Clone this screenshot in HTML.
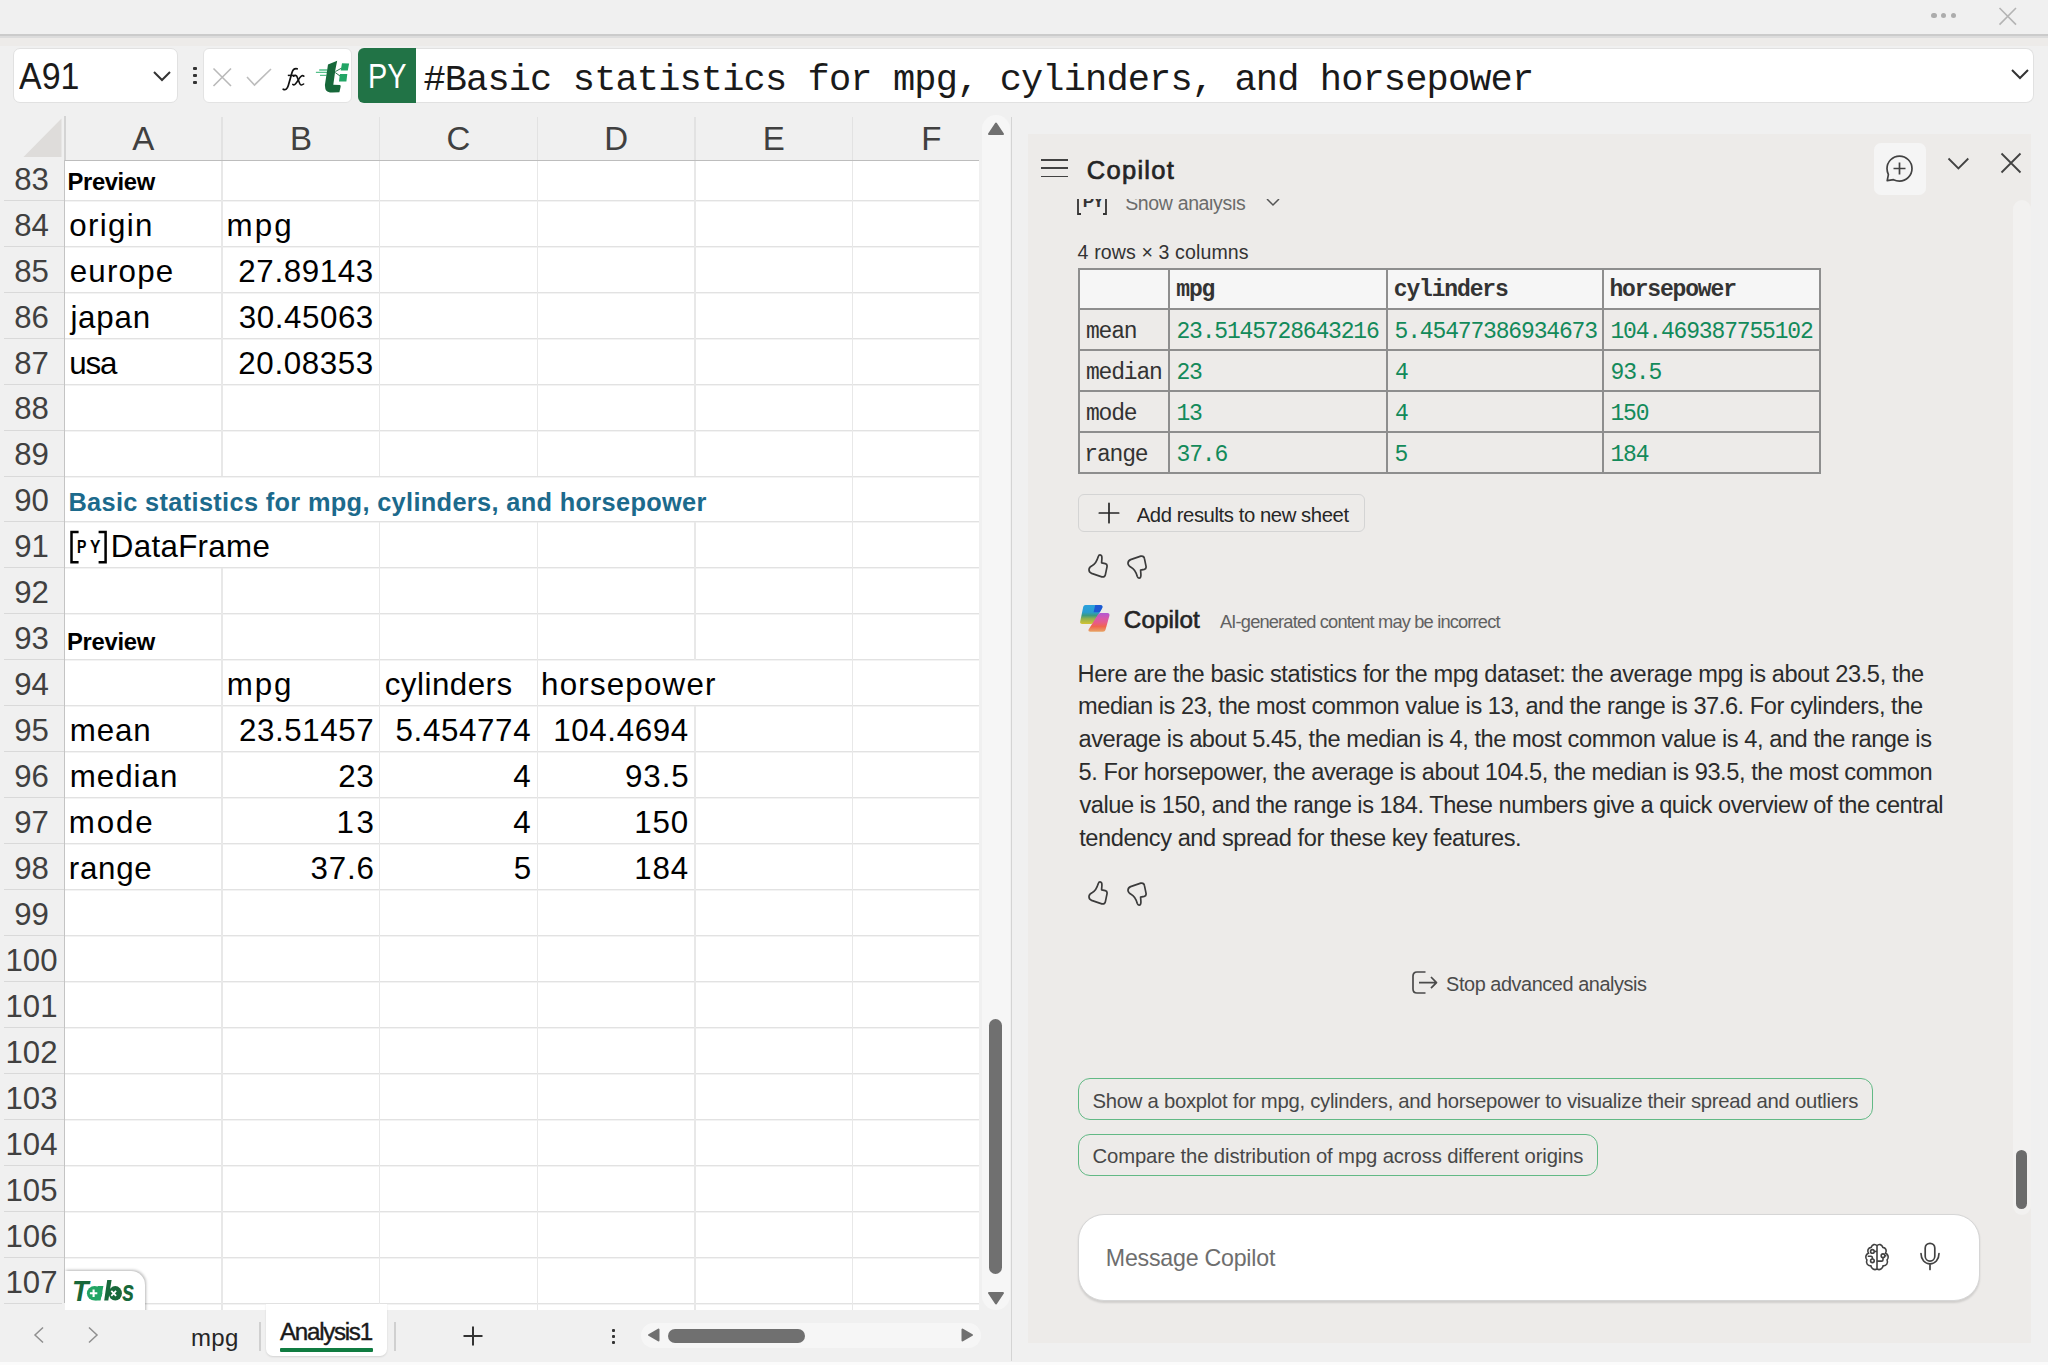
<!DOCTYPE html>
<html><head><meta charset="utf-8"><style>
html,body{margin:0;padding:0;}
body{width:2048px;height:1365px;position:relative;overflow:hidden;background:#f0f0f0;font-family:'Liberation Sans',sans-serif;}
</style></head><body>
<div style="position:absolute;left:0px;top:0px;width:2048px;height:34px;background:#f0f0f0"></div>
<div style="position:absolute;left:0px;top:33.5px;width:2048px;height:2px;background:#cbcbcb"></div>
<div style="position:absolute;left:0px;top:35.5px;width:2048px;height:2px;background:#dcdcdc"></div>
<div style="position:absolute;left:0px;top:37.5px;width:2048px;height:8px;background:#edebe9"></div>
<div style="position:absolute;left:1931.4px;top:12.700000000000001px;width:5.2px;height:5.2px;background:#acacac;border-radius:50%"></div>
<div style="position:absolute;left:1940.9px;top:12.700000000000001px;width:5.2px;height:5.2px;background:#acacac;border-radius:50%"></div>
<div style="position:absolute;left:1950.9px;top:12.700000000000001px;width:5.2px;height:5.2px;background:#acacac;border-radius:50%"></div>
<svg style="position:absolute;left:1997px;top:6px" width="22" height="21"><path d="M2.5 2 L19 18.6 M19 2 L2.5 18.6" stroke="#b4b4b4" stroke-width="1.6"/></svg>
<div style="position:absolute;left:13px;top:47.5px;width:165px;height:55.5px;background:#fff;border:1px solid #e1e1e1;border-radius:7px;box-sizing:border-box"></div>
<div style="position:absolute;top:58.20px;font-family:'Liberation Sans',sans-serif;font-size:37.68px;line-height:37.68px;color:#1a1a1a;font-weight:normal;white-space:nowrap;left:19.00px;transform:scaleX(0.9005);transform-origin:0 0;">A91</div>
<svg style="position:absolute;left:152px;top:70px" width="20" height="13"><path d="M2 2 L10 10 L18 2" fill="none" stroke="#333" stroke-width="2"/></svg>
<div style="position:absolute;left:192.5px;top:66.7px;width:4px;height:3.8px;background:#333;border-radius:1px"></div>
<div style="position:absolute;left:192.5px;top:73.7px;width:4px;height:3.8px;background:#333;border-radius:1px"></div>
<div style="position:absolute;left:192.5px;top:80.7px;width:4px;height:3.8px;background:#333;border-radius:1px"></div>
<div style="position:absolute;left:203px;top:48px;width:149px;height:55px;background:#fff;border:1px solid #e3e3e3;border-radius:6px;box-sizing:border-box"></div>
<svg style="position:absolute;left:211px;top:66px" width="24" height="22"><path d="M2.5 2.5 L20 20 M20 2.5 L2.5 20" stroke="#b9b9b9" stroke-width="1.6"/></svg>
<svg style="position:absolute;left:245px;top:67px" width="28" height="20"><path d="M2 10 L9.5 18 L26 2" fill="none" stroke="#bdbdbd" stroke-width="1.6"/></svg>
<svg style="position:absolute;left:275px;top:60px" width="36" height="36" viewBox="275 60 36 36"><path d="M283.2 89.2 C285.5 90.6 287.3 88.8 288.3 85.5 L292 72.5 C293 69.3 294.6 68.2 297.2 68.8" fill="none" stroke="#111" stroke-width="1.7" stroke-linecap="round"/><path d="M287.8 75.4 H295.8" stroke="#111" stroke-width="1.5"/><path d="M293.5 76.2 C295.5 74.8 296.6 75.5 297.4 77.6 L299.6 83.2 C300.4 85.2 301.6 85.6 303.6 84" fill="none" stroke="#111" stroke-width="1.6" stroke-linecap="round"/><path d="M303.8 76.2 C302.5 75 301.4 75.6 300 77.4 L296.8 82.2 C295.3 84.6 294 85.4 292.8 84.4" fill="none" stroke="#111" stroke-width="1.6" stroke-linecap="round"/></svg>
<svg style="position:absolute;left:310px;top:55px" width="45" height="42" viewBox="310 55 45 42"><path d="M319.2 70 H327.5 M315.9 72.4 H327 M320 75.3 H326.5" stroke="#56c08a" stroke-width="1.3"/><path d="M335.5 71.5 L341.2 68.3 M335.2 72.5 L340 76" stroke="#17683a" stroke-width="0.9"/><path d="M328 64.5 L337.2 60.8 L335.5 68.9 L333.3 84.7 L340.3 85.1 L340.7 86.5 L339.4 92.2 L332.4 92.6 C329 92.6 325.8 91.5 325.3 88.5 L324.9 85.1 Z" fill="#17683a"/><path d="M342 63.2 L349.1 63.6 L347.8 70.6 L340.7 70.6 Z M339.9 73.9 L347.3 73.9 L346.4 81.4 L339 81.4 Z" fill="#22a565"/></svg>
<div style="position:absolute;left:358.3px;top:48px;width:58px;height:55px;background:#217346;border-radius:6px 0 0 6px"></div>
<div style="position:absolute;top:59.00px;font-family:'Liberation Sans',sans-serif;font-size:34.78px;line-height:34.78px;color:#fff;font-weight:normal;white-space:nowrap;left:367.74px;transform:scaleX(0.8313);transform-origin:0 0;">PY</div>
<div style="position:absolute;left:416px;top:47.5px;width:1618px;height:55.5px;background:#fff;border:1px solid #e1e1e1;border-left:none;border-radius:0 8px 8px 0;box-sizing:border-box"></div>
<div style="position:absolute;top:61.50px;font-family:'Liberation Mono',monospace;font-size:37px;line-height:37px;color:#1a1a1a;font-weight:normal;white-space:nowrap;letter-spacing:-0.860px;left:423.42px;">#Basic statistics for mpg, cylinders, and horsepower</div>
<svg style="position:absolute;left:2010px;top:68px" width="20" height="13"><path d="M2 2 L10 10 L18 2" fill="none" stroke="#333" stroke-width="2"/></svg>
<div style="position:absolute;left:64.5px;top:160px;width:914.5px;height:1150px;background:#fff"></div>
<svg style="position:absolute;left:22px;top:117px" width="41" height="41"><path d="M1.5 40 L39.5 1.5 L39.5 40 Z" fill="#dedcda"/></svg>
<div style="position:absolute;left:221.35px;top:117px;width:1.5px;height:43px;background:#e2e2e2"></div>
<div style="position:absolute;left:378.95px;top:117px;width:1.5px;height:43px;background:#e2e2e2"></div>
<div style="position:absolute;left:536.55px;top:117px;width:1.5px;height:43px;background:#e2e2e2"></div>
<div style="position:absolute;left:694.15px;top:117px;width:1.5px;height:43px;background:#e2e2e2"></div>
<div style="position:absolute;left:851.75px;top:117px;width:1.5px;height:43px;background:#e2e2e2"></div>
<div style="position:absolute;left:64px;top:116px;width:1.5px;height:44px;background:#d4d4d4"></div>
<div style="position:absolute;top:122.40px;font-family:'Liberation Sans',sans-serif;font-size:33.04px;line-height:33.04px;color:#404040;font-weight:normal;white-space:nowrap;left:-456.7px;width:1200px;text-align:center;">A</div>
<div style="position:absolute;top:122.40px;font-family:'Liberation Sans',sans-serif;font-size:33.04px;line-height:33.04px;color:#404040;font-weight:normal;white-space:nowrap;left:-299.1px;width:1200px;text-align:center;">B</div>
<div style="position:absolute;top:122.40px;font-family:'Liberation Sans',sans-serif;font-size:33.04px;line-height:33.04px;color:#404040;font-weight:normal;white-space:nowrap;left:-141.5px;width:1200px;text-align:center;">C</div>
<div style="position:absolute;top:122.40px;font-family:'Liberation Sans',sans-serif;font-size:33.04px;line-height:33.04px;color:#404040;font-weight:normal;white-space:nowrap;left:16.09999999999991px;width:1200px;text-align:center;">D</div>
<div style="position:absolute;top:122.40px;font-family:'Liberation Sans',sans-serif;font-size:33.04px;line-height:33.04px;color:#404040;font-weight:normal;white-space:nowrap;left:173.70000000000005px;width:1200px;text-align:center;">E</div>
<div style="position:absolute;top:122.40px;font-family:'Liberation Sans',sans-serif;font-size:33.04px;line-height:33.04px;color:#404040;font-weight:normal;white-space:nowrap;left:331.29999999999995px;width:1200px;text-align:center;">F</div>
<div style="position:absolute;left:4px;top:200px;width:60px;height:1px;background:#d9d9d9"></div>
<div style="position:absolute;left:64.5px;top:200px;width:914.5px;height:1px;background:#e2e2e2"></div>
<div style="position:absolute;left:64.5px;top:201px;width:914.5px;height:0.5px;background:#f3f3f3"></div>
<div style="position:absolute;left:4px;top:246px;width:60px;height:1px;background:#d9d9d9"></div>
<div style="position:absolute;left:64.5px;top:246px;width:914.5px;height:1px;background:#e2e2e2"></div>
<div style="position:absolute;left:64.5px;top:247px;width:914.5px;height:0.5px;background:#f3f3f3"></div>
<div style="position:absolute;left:4px;top:292px;width:60px;height:1px;background:#d9d9d9"></div>
<div style="position:absolute;left:64.5px;top:292px;width:914.5px;height:1px;background:#e2e2e2"></div>
<div style="position:absolute;left:64.5px;top:293px;width:914.5px;height:0.5px;background:#f3f3f3"></div>
<div style="position:absolute;left:4px;top:338px;width:60px;height:1px;background:#d9d9d9"></div>
<div style="position:absolute;left:64.5px;top:338px;width:914.5px;height:1px;background:#e2e2e2"></div>
<div style="position:absolute;left:64.5px;top:339px;width:914.5px;height:0.5px;background:#f3f3f3"></div>
<div style="position:absolute;left:4px;top:384px;width:60px;height:1px;background:#d9d9d9"></div>
<div style="position:absolute;left:64.5px;top:384px;width:914.5px;height:1px;background:#e2e2e2"></div>
<div style="position:absolute;left:64.5px;top:385px;width:914.5px;height:0.5px;background:#f3f3f3"></div>
<div style="position:absolute;left:4px;top:430px;width:60px;height:1px;background:#d9d9d9"></div>
<div style="position:absolute;left:64.5px;top:430px;width:914.5px;height:1px;background:#e2e2e2"></div>
<div style="position:absolute;left:64.5px;top:431px;width:914.5px;height:0.5px;background:#f3f3f3"></div>
<div style="position:absolute;left:4px;top:476px;width:60px;height:1px;background:#d9d9d9"></div>
<div style="position:absolute;left:64.5px;top:476px;width:914.5px;height:1px;background:#e2e2e2"></div>
<div style="position:absolute;left:64.5px;top:477px;width:914.5px;height:0.5px;background:#f3f3f3"></div>
<div style="position:absolute;left:4px;top:521px;width:60px;height:1px;background:#d9d9d9"></div>
<div style="position:absolute;left:64.5px;top:521px;width:914.5px;height:1px;background:#e2e2e2"></div>
<div style="position:absolute;left:64.5px;top:522px;width:914.5px;height:0.5px;background:#f3f3f3"></div>
<div style="position:absolute;left:4px;top:567px;width:60px;height:1px;background:#d9d9d9"></div>
<div style="position:absolute;left:64.5px;top:567px;width:914.5px;height:1px;background:#e2e2e2"></div>
<div style="position:absolute;left:64.5px;top:568px;width:914.5px;height:0.5px;background:#f3f3f3"></div>
<div style="position:absolute;left:4px;top:613px;width:60px;height:1px;background:#d9d9d9"></div>
<div style="position:absolute;left:64.5px;top:613px;width:914.5px;height:1px;background:#e2e2e2"></div>
<div style="position:absolute;left:64.5px;top:614px;width:914.5px;height:0.5px;background:#f3f3f3"></div>
<div style="position:absolute;left:4px;top:659px;width:60px;height:1px;background:#d9d9d9"></div>
<div style="position:absolute;left:64.5px;top:659px;width:914.5px;height:1px;background:#e2e2e2"></div>
<div style="position:absolute;left:64.5px;top:660px;width:914.5px;height:0.5px;background:#f3f3f3"></div>
<div style="position:absolute;left:4px;top:705px;width:60px;height:1px;background:#d9d9d9"></div>
<div style="position:absolute;left:64.5px;top:705px;width:914.5px;height:1px;background:#e2e2e2"></div>
<div style="position:absolute;left:64.5px;top:706px;width:914.5px;height:0.5px;background:#f3f3f3"></div>
<div style="position:absolute;left:4px;top:751px;width:60px;height:1px;background:#d9d9d9"></div>
<div style="position:absolute;left:64.5px;top:751px;width:914.5px;height:1px;background:#e2e2e2"></div>
<div style="position:absolute;left:64.5px;top:752px;width:914.5px;height:0.5px;background:#f3f3f3"></div>
<div style="position:absolute;left:4px;top:797px;width:60px;height:1px;background:#d9d9d9"></div>
<div style="position:absolute;left:64.5px;top:797px;width:914.5px;height:1px;background:#e2e2e2"></div>
<div style="position:absolute;left:64.5px;top:798px;width:914.5px;height:0.5px;background:#f3f3f3"></div>
<div style="position:absolute;left:4px;top:843px;width:60px;height:1px;background:#d9d9d9"></div>
<div style="position:absolute;left:64.5px;top:843px;width:914.5px;height:1px;background:#e2e2e2"></div>
<div style="position:absolute;left:64.5px;top:844px;width:914.5px;height:0.5px;background:#f3f3f3"></div>
<div style="position:absolute;left:4px;top:889px;width:60px;height:1px;background:#d9d9d9"></div>
<div style="position:absolute;left:64.5px;top:889px;width:914.5px;height:1px;background:#e2e2e2"></div>
<div style="position:absolute;left:64.5px;top:890px;width:914.5px;height:0.5px;background:#f3f3f3"></div>
<div style="position:absolute;left:4px;top:935px;width:60px;height:1px;background:#d9d9d9"></div>
<div style="position:absolute;left:64.5px;top:935px;width:914.5px;height:1px;background:#e2e2e2"></div>
<div style="position:absolute;left:64.5px;top:936px;width:914.5px;height:0.5px;background:#f3f3f3"></div>
<div style="position:absolute;left:4px;top:981px;width:60px;height:1px;background:#d9d9d9"></div>
<div style="position:absolute;left:64.5px;top:981px;width:914.5px;height:1px;background:#e2e2e2"></div>
<div style="position:absolute;left:64.5px;top:982px;width:914.5px;height:0.5px;background:#f3f3f3"></div>
<div style="position:absolute;left:4px;top:1027px;width:60px;height:1px;background:#d9d9d9"></div>
<div style="position:absolute;left:64.5px;top:1027px;width:914.5px;height:1px;background:#e2e2e2"></div>
<div style="position:absolute;left:64.5px;top:1028px;width:914.5px;height:0.5px;background:#f3f3f3"></div>
<div style="position:absolute;left:4px;top:1073px;width:60px;height:1px;background:#d9d9d9"></div>
<div style="position:absolute;left:64.5px;top:1073px;width:914.5px;height:1px;background:#e2e2e2"></div>
<div style="position:absolute;left:64.5px;top:1074px;width:914.5px;height:0.5px;background:#f3f3f3"></div>
<div style="position:absolute;left:4px;top:1119px;width:60px;height:1px;background:#d9d9d9"></div>
<div style="position:absolute;left:64.5px;top:1119px;width:914.5px;height:1px;background:#e2e2e2"></div>
<div style="position:absolute;left:64.5px;top:1120px;width:914.5px;height:0.5px;background:#f3f3f3"></div>
<div style="position:absolute;left:4px;top:1165px;width:60px;height:1px;background:#d9d9d9"></div>
<div style="position:absolute;left:64.5px;top:1165px;width:914.5px;height:1px;background:#e2e2e2"></div>
<div style="position:absolute;left:64.5px;top:1166px;width:914.5px;height:0.5px;background:#f3f3f3"></div>
<div style="position:absolute;left:4px;top:1211px;width:60px;height:1px;background:#d9d9d9"></div>
<div style="position:absolute;left:64.5px;top:1211px;width:914.5px;height:1px;background:#e2e2e2"></div>
<div style="position:absolute;left:64.5px;top:1212px;width:914.5px;height:0.5px;background:#f3f3f3"></div>
<div style="position:absolute;left:4px;top:1257px;width:60px;height:1px;background:#d9d9d9"></div>
<div style="position:absolute;left:64.5px;top:1257px;width:914.5px;height:1px;background:#e2e2e2"></div>
<div style="position:absolute;left:64.5px;top:1258px;width:914.5px;height:0.5px;background:#f3f3f3"></div>
<div style="position:absolute;left:4px;top:1303px;width:60px;height:1px;background:#d9d9d9"></div>
<div style="position:absolute;left:64.5px;top:1303px;width:914.5px;height:1px;background:#e2e2e2"></div>
<div style="position:absolute;left:64.5px;top:1304px;width:914.5px;height:0.5px;background:#f3f3f3"></div>
<div style="position:absolute;left:221.35px;top:160px;width:1.5px;height:40.0px;background:#e8e8e8"></div>
<div style="position:absolute;left:378.95px;top:160px;width:1.5px;height:40.0px;background:#e8e8e8"></div>
<div style="position:absolute;left:536.55px;top:160px;width:1.5px;height:40.0px;background:#e8e8e8"></div>
<div style="position:absolute;left:694.15px;top:160px;width:1.5px;height:40.0px;background:#e8e8e8"></div>
<div style="position:absolute;left:851.75px;top:160px;width:1.5px;height:40.0px;background:#e8e8e8"></div>
<div style="position:absolute;left:221.35px;top:200.0px;width:1.5px;height:45.956999999999994px;background:#e8e8e8"></div>
<div style="position:absolute;left:378.95px;top:200.0px;width:1.5px;height:45.956999999999994px;background:#e8e8e8"></div>
<div style="position:absolute;left:536.55px;top:200.0px;width:1.5px;height:45.956999999999994px;background:#e8e8e8"></div>
<div style="position:absolute;left:694.15px;top:200.0px;width:1.5px;height:45.956999999999994px;background:#e8e8e8"></div>
<div style="position:absolute;left:851.75px;top:200.0px;width:1.5px;height:45.956999999999994px;background:#e8e8e8"></div>
<div style="position:absolute;left:221.35px;top:245.957px;width:1.5px;height:45.956999999999994px;background:#e8e8e8"></div>
<div style="position:absolute;left:378.95px;top:245.957px;width:1.5px;height:45.956999999999994px;background:#e8e8e8"></div>
<div style="position:absolute;left:536.55px;top:245.957px;width:1.5px;height:45.956999999999994px;background:#e8e8e8"></div>
<div style="position:absolute;left:694.15px;top:245.957px;width:1.5px;height:45.956999999999994px;background:#e8e8e8"></div>
<div style="position:absolute;left:851.75px;top:245.957px;width:1.5px;height:45.956999999999994px;background:#e8e8e8"></div>
<div style="position:absolute;left:221.35px;top:291.914px;width:1.5px;height:45.956999999999994px;background:#e8e8e8"></div>
<div style="position:absolute;left:378.95px;top:291.914px;width:1.5px;height:45.956999999999994px;background:#e8e8e8"></div>
<div style="position:absolute;left:536.55px;top:291.914px;width:1.5px;height:45.956999999999994px;background:#e8e8e8"></div>
<div style="position:absolute;left:694.15px;top:291.914px;width:1.5px;height:45.956999999999994px;background:#e8e8e8"></div>
<div style="position:absolute;left:851.75px;top:291.914px;width:1.5px;height:45.956999999999994px;background:#e8e8e8"></div>
<div style="position:absolute;left:221.35px;top:337.871px;width:1.5px;height:45.956999999999994px;background:#e8e8e8"></div>
<div style="position:absolute;left:378.95px;top:337.871px;width:1.5px;height:45.956999999999994px;background:#e8e8e8"></div>
<div style="position:absolute;left:536.55px;top:337.871px;width:1.5px;height:45.956999999999994px;background:#e8e8e8"></div>
<div style="position:absolute;left:694.15px;top:337.871px;width:1.5px;height:45.956999999999994px;background:#e8e8e8"></div>
<div style="position:absolute;left:851.75px;top:337.871px;width:1.5px;height:45.956999999999994px;background:#e8e8e8"></div>
<div style="position:absolute;left:221.35px;top:383.828px;width:1.5px;height:45.956999999999994px;background:#e8e8e8"></div>
<div style="position:absolute;left:378.95px;top:383.828px;width:1.5px;height:45.956999999999994px;background:#e8e8e8"></div>
<div style="position:absolute;left:536.55px;top:383.828px;width:1.5px;height:45.956999999999994px;background:#e8e8e8"></div>
<div style="position:absolute;left:694.15px;top:383.828px;width:1.5px;height:45.956999999999994px;background:#e8e8e8"></div>
<div style="position:absolute;left:851.75px;top:383.828px;width:1.5px;height:45.956999999999994px;background:#e8e8e8"></div>
<div style="position:absolute;left:221.35px;top:429.78499999999997px;width:1.5px;height:45.95700000000005px;background:#e8e8e8"></div>
<div style="position:absolute;left:378.95px;top:429.78499999999997px;width:1.5px;height:45.95700000000005px;background:#e8e8e8"></div>
<div style="position:absolute;left:536.55px;top:429.78499999999997px;width:1.5px;height:45.95700000000005px;background:#e8e8e8"></div>
<div style="position:absolute;left:694.15px;top:429.78499999999997px;width:1.5px;height:45.95700000000005px;background:#e8e8e8"></div>
<div style="position:absolute;left:851.75px;top:429.78499999999997px;width:1.5px;height:45.95700000000005px;background:#e8e8e8"></div>
<div style="position:absolute;left:851.75px;top:475.742px;width:1.5px;height:45.95700000000005px;background:#e8e8e8"></div>
<div style="position:absolute;left:378.95px;top:521.6990000000001px;width:1.5px;height:45.95699999999988px;background:#e8e8e8"></div>
<div style="position:absolute;left:536.55px;top:521.6990000000001px;width:1.5px;height:45.95699999999988px;background:#e8e8e8"></div>
<div style="position:absolute;left:694.15px;top:521.6990000000001px;width:1.5px;height:45.95699999999988px;background:#e8e8e8"></div>
<div style="position:absolute;left:851.75px;top:521.6990000000001px;width:1.5px;height:45.95699999999988px;background:#e8e8e8"></div>
<div style="position:absolute;left:221.35px;top:567.656px;width:1.5px;height:45.95700000000011px;background:#e8e8e8"></div>
<div style="position:absolute;left:378.95px;top:567.656px;width:1.5px;height:45.95700000000011px;background:#e8e8e8"></div>
<div style="position:absolute;left:536.55px;top:567.656px;width:1.5px;height:45.95700000000011px;background:#e8e8e8"></div>
<div style="position:absolute;left:694.15px;top:567.656px;width:1.5px;height:45.95700000000011px;background:#e8e8e8"></div>
<div style="position:absolute;left:851.75px;top:567.656px;width:1.5px;height:45.95700000000011px;background:#e8e8e8"></div>
<div style="position:absolute;left:221.35px;top:613.613px;width:1.5px;height:45.95699999999988px;background:#e8e8e8"></div>
<div style="position:absolute;left:378.95px;top:613.613px;width:1.5px;height:45.95699999999988px;background:#e8e8e8"></div>
<div style="position:absolute;left:536.55px;top:613.613px;width:1.5px;height:45.95699999999988px;background:#e8e8e8"></div>
<div style="position:absolute;left:694.15px;top:613.613px;width:1.5px;height:45.95699999999988px;background:#e8e8e8"></div>
<div style="position:absolute;left:851.75px;top:613.613px;width:1.5px;height:45.95699999999988px;background:#e8e8e8"></div>
<div style="position:absolute;left:221.35px;top:659.5699999999999px;width:1.5px;height:45.95700000000011px;background:#e8e8e8"></div>
<div style="position:absolute;left:378.95px;top:659.5699999999999px;width:1.5px;height:45.95700000000011px;background:#e8e8e8"></div>
<div style="position:absolute;left:536.55px;top:659.5699999999999px;width:1.5px;height:45.95700000000011px;background:#e8e8e8"></div>
<div style="position:absolute;left:851.75px;top:659.5699999999999px;width:1.5px;height:45.95700000000011px;background:#e8e8e8"></div>
<div style="position:absolute;left:221.35px;top:705.527px;width:1.5px;height:45.956999999999994px;background:#e8e8e8"></div>
<div style="position:absolute;left:378.95px;top:705.527px;width:1.5px;height:45.956999999999994px;background:#e8e8e8"></div>
<div style="position:absolute;left:536.55px;top:705.527px;width:1.5px;height:45.956999999999994px;background:#e8e8e8"></div>
<div style="position:absolute;left:694.15px;top:705.527px;width:1.5px;height:45.956999999999994px;background:#e8e8e8"></div>
<div style="position:absolute;left:851.75px;top:705.527px;width:1.5px;height:45.956999999999994px;background:#e8e8e8"></div>
<div style="position:absolute;left:221.35px;top:751.484px;width:1.5px;height:45.956999999999994px;background:#e8e8e8"></div>
<div style="position:absolute;left:378.95px;top:751.484px;width:1.5px;height:45.956999999999994px;background:#e8e8e8"></div>
<div style="position:absolute;left:536.55px;top:751.484px;width:1.5px;height:45.956999999999994px;background:#e8e8e8"></div>
<div style="position:absolute;left:694.15px;top:751.484px;width:1.5px;height:45.956999999999994px;background:#e8e8e8"></div>
<div style="position:absolute;left:851.75px;top:751.484px;width:1.5px;height:45.956999999999994px;background:#e8e8e8"></div>
<div style="position:absolute;left:221.35px;top:797.441px;width:1.5px;height:45.956999999999994px;background:#e8e8e8"></div>
<div style="position:absolute;left:378.95px;top:797.441px;width:1.5px;height:45.956999999999994px;background:#e8e8e8"></div>
<div style="position:absolute;left:536.55px;top:797.441px;width:1.5px;height:45.956999999999994px;background:#e8e8e8"></div>
<div style="position:absolute;left:694.15px;top:797.441px;width:1.5px;height:45.956999999999994px;background:#e8e8e8"></div>
<div style="position:absolute;left:851.75px;top:797.441px;width:1.5px;height:45.956999999999994px;background:#e8e8e8"></div>
<div style="position:absolute;left:221.35px;top:843.398px;width:1.5px;height:45.956999999999994px;background:#e8e8e8"></div>
<div style="position:absolute;left:378.95px;top:843.398px;width:1.5px;height:45.956999999999994px;background:#e8e8e8"></div>
<div style="position:absolute;left:536.55px;top:843.398px;width:1.5px;height:45.956999999999994px;background:#e8e8e8"></div>
<div style="position:absolute;left:694.15px;top:843.398px;width:1.5px;height:45.956999999999994px;background:#e8e8e8"></div>
<div style="position:absolute;left:851.75px;top:843.398px;width:1.5px;height:45.956999999999994px;background:#e8e8e8"></div>
<div style="position:absolute;left:221.35px;top:889.355px;width:1.5px;height:45.956999999999994px;background:#e8e8e8"></div>
<div style="position:absolute;left:378.95px;top:889.355px;width:1.5px;height:45.956999999999994px;background:#e8e8e8"></div>
<div style="position:absolute;left:536.55px;top:889.355px;width:1.5px;height:45.956999999999994px;background:#e8e8e8"></div>
<div style="position:absolute;left:694.15px;top:889.355px;width:1.5px;height:45.956999999999994px;background:#e8e8e8"></div>
<div style="position:absolute;left:851.75px;top:889.355px;width:1.5px;height:45.956999999999994px;background:#e8e8e8"></div>
<div style="position:absolute;left:221.35px;top:935.312px;width:1.5px;height:45.956999999999994px;background:#e8e8e8"></div>
<div style="position:absolute;left:378.95px;top:935.312px;width:1.5px;height:45.956999999999994px;background:#e8e8e8"></div>
<div style="position:absolute;left:536.55px;top:935.312px;width:1.5px;height:45.956999999999994px;background:#e8e8e8"></div>
<div style="position:absolute;left:694.15px;top:935.312px;width:1.5px;height:45.956999999999994px;background:#e8e8e8"></div>
<div style="position:absolute;left:851.75px;top:935.312px;width:1.5px;height:45.956999999999994px;background:#e8e8e8"></div>
<div style="position:absolute;left:221.35px;top:981.269px;width:1.5px;height:45.95700000000011px;background:#e8e8e8"></div>
<div style="position:absolute;left:378.95px;top:981.269px;width:1.5px;height:45.95700000000011px;background:#e8e8e8"></div>
<div style="position:absolute;left:536.55px;top:981.269px;width:1.5px;height:45.95700000000011px;background:#e8e8e8"></div>
<div style="position:absolute;left:694.15px;top:981.269px;width:1.5px;height:45.95700000000011px;background:#e8e8e8"></div>
<div style="position:absolute;left:851.75px;top:981.269px;width:1.5px;height:45.95700000000011px;background:#e8e8e8"></div>
<div style="position:absolute;left:221.35px;top:1027.226px;width:1.5px;height:45.95699999999988px;background:#e8e8e8"></div>
<div style="position:absolute;left:378.95px;top:1027.226px;width:1.5px;height:45.95699999999988px;background:#e8e8e8"></div>
<div style="position:absolute;left:536.55px;top:1027.226px;width:1.5px;height:45.95699999999988px;background:#e8e8e8"></div>
<div style="position:absolute;left:694.15px;top:1027.226px;width:1.5px;height:45.95699999999988px;background:#e8e8e8"></div>
<div style="position:absolute;left:851.75px;top:1027.226px;width:1.5px;height:45.95699999999988px;background:#e8e8e8"></div>
<div style="position:absolute;left:221.35px;top:1073.183px;width:1.5px;height:45.95699999999988px;background:#e8e8e8"></div>
<div style="position:absolute;left:378.95px;top:1073.183px;width:1.5px;height:45.95699999999988px;background:#e8e8e8"></div>
<div style="position:absolute;left:536.55px;top:1073.183px;width:1.5px;height:45.95699999999988px;background:#e8e8e8"></div>
<div style="position:absolute;left:694.15px;top:1073.183px;width:1.5px;height:45.95699999999988px;background:#e8e8e8"></div>
<div style="position:absolute;left:851.75px;top:1073.183px;width:1.5px;height:45.95699999999988px;background:#e8e8e8"></div>
<div style="position:absolute;left:221.35px;top:1119.1399999999999px;width:1.5px;height:45.95700000000011px;background:#e8e8e8"></div>
<div style="position:absolute;left:378.95px;top:1119.1399999999999px;width:1.5px;height:45.95700000000011px;background:#e8e8e8"></div>
<div style="position:absolute;left:536.55px;top:1119.1399999999999px;width:1.5px;height:45.95700000000011px;background:#e8e8e8"></div>
<div style="position:absolute;left:694.15px;top:1119.1399999999999px;width:1.5px;height:45.95700000000011px;background:#e8e8e8"></div>
<div style="position:absolute;left:851.75px;top:1119.1399999999999px;width:1.5px;height:45.95700000000011px;background:#e8e8e8"></div>
<div style="position:absolute;left:221.35px;top:1165.097px;width:1.5px;height:45.95700000000011px;background:#e8e8e8"></div>
<div style="position:absolute;left:378.95px;top:1165.097px;width:1.5px;height:45.95700000000011px;background:#e8e8e8"></div>
<div style="position:absolute;left:536.55px;top:1165.097px;width:1.5px;height:45.95700000000011px;background:#e8e8e8"></div>
<div style="position:absolute;left:694.15px;top:1165.097px;width:1.5px;height:45.95700000000011px;background:#e8e8e8"></div>
<div style="position:absolute;left:851.75px;top:1165.097px;width:1.5px;height:45.95700000000011px;background:#e8e8e8"></div>
<div style="position:absolute;left:221.35px;top:1211.054px;width:1.5px;height:45.95699999999988px;background:#e8e8e8"></div>
<div style="position:absolute;left:378.95px;top:1211.054px;width:1.5px;height:45.95699999999988px;background:#e8e8e8"></div>
<div style="position:absolute;left:536.55px;top:1211.054px;width:1.5px;height:45.95699999999988px;background:#e8e8e8"></div>
<div style="position:absolute;left:694.15px;top:1211.054px;width:1.5px;height:45.95699999999988px;background:#e8e8e8"></div>
<div style="position:absolute;left:851.75px;top:1211.054px;width:1.5px;height:45.95699999999988px;background:#e8e8e8"></div>
<div style="position:absolute;left:221.35px;top:1257.011px;width:1.5px;height:52.98900000000003px;background:#e8e8e8"></div>
<div style="position:absolute;left:378.95px;top:1257.011px;width:1.5px;height:52.98900000000003px;background:#e8e8e8"></div>
<div style="position:absolute;left:536.55px;top:1257.011px;width:1.5px;height:52.98900000000003px;background:#e8e8e8"></div>
<div style="position:absolute;left:694.15px;top:1257.011px;width:1.5px;height:52.98900000000003px;background:#e8e8e8"></div>
<div style="position:absolute;left:851.75px;top:1257.011px;width:1.5px;height:52.98900000000003px;background:#e8e8e8"></div>
<div style="position:absolute;left:64.5px;top:159.5px;width:914.5px;height:1.8px;background:#bdbdbd"></div>
<div style="position:absolute;left:63.5px;top:160px;width:1.8px;height:1150px;background:#c4c4c4"></div>
<div style="position:absolute;top:163.70px;font-family:'Liberation Sans',sans-serif;font-size:31.16px;line-height:31.16px;color:#404040;font-weight:normal;white-space:nowrap;left:-568.5px;width:1200px;text-align:center;">83</div>
<div style="position:absolute;top:209.66px;font-family:'Liberation Sans',sans-serif;font-size:31.16px;line-height:31.16px;color:#404040;font-weight:normal;white-space:nowrap;left:-568.5px;width:1200px;text-align:center;">84</div>
<div style="position:absolute;top:255.61px;font-family:'Liberation Sans',sans-serif;font-size:31.16px;line-height:31.16px;color:#404040;font-weight:normal;white-space:nowrap;left:-568.5px;width:1200px;text-align:center;">85</div>
<div style="position:absolute;top:301.57px;font-family:'Liberation Sans',sans-serif;font-size:31.16px;line-height:31.16px;color:#404040;font-weight:normal;white-space:nowrap;left:-568.5px;width:1200px;text-align:center;">86</div>
<div style="position:absolute;top:347.53px;font-family:'Liberation Sans',sans-serif;font-size:31.16px;line-height:31.16px;color:#404040;font-weight:normal;white-space:nowrap;left:-568.5px;width:1200px;text-align:center;">87</div>
<div style="position:absolute;top:393.48px;font-family:'Liberation Sans',sans-serif;font-size:31.16px;line-height:31.16px;color:#404040;font-weight:normal;white-space:nowrap;left:-568.5px;width:1200px;text-align:center;">88</div>
<div style="position:absolute;top:439.44px;font-family:'Liberation Sans',sans-serif;font-size:31.16px;line-height:31.16px;color:#404040;font-weight:normal;white-space:nowrap;left:-568.5px;width:1200px;text-align:center;">89</div>
<div style="position:absolute;top:485.40px;font-family:'Liberation Sans',sans-serif;font-size:31.16px;line-height:31.16px;color:#404040;font-weight:normal;white-space:nowrap;left:-568.5px;width:1200px;text-align:center;">90</div>
<div style="position:absolute;top:531.36px;font-family:'Liberation Sans',sans-serif;font-size:31.16px;line-height:31.16px;color:#404040;font-weight:normal;white-space:nowrap;left:-568.5px;width:1200px;text-align:center;">91</div>
<div style="position:absolute;top:577.31px;font-family:'Liberation Sans',sans-serif;font-size:31.16px;line-height:31.16px;color:#404040;font-weight:normal;white-space:nowrap;left:-568.5px;width:1200px;text-align:center;">92</div>
<div style="position:absolute;top:623.27px;font-family:'Liberation Sans',sans-serif;font-size:31.16px;line-height:31.16px;color:#404040;font-weight:normal;white-space:nowrap;left:-568.5px;width:1200px;text-align:center;">93</div>
<div style="position:absolute;top:669.23px;font-family:'Liberation Sans',sans-serif;font-size:31.16px;line-height:31.16px;color:#404040;font-weight:normal;white-space:nowrap;left:-568.5px;width:1200px;text-align:center;">94</div>
<div style="position:absolute;top:715.18px;font-family:'Liberation Sans',sans-serif;font-size:31.16px;line-height:31.16px;color:#404040;font-weight:normal;white-space:nowrap;left:-568.5px;width:1200px;text-align:center;">95</div>
<div style="position:absolute;top:761.14px;font-family:'Liberation Sans',sans-serif;font-size:31.16px;line-height:31.16px;color:#404040;font-weight:normal;white-space:nowrap;left:-568.5px;width:1200px;text-align:center;">96</div>
<div style="position:absolute;top:807.10px;font-family:'Liberation Sans',sans-serif;font-size:31.16px;line-height:31.16px;color:#404040;font-weight:normal;white-space:nowrap;left:-568.5px;width:1200px;text-align:center;">97</div>
<div style="position:absolute;top:853.06px;font-family:'Liberation Sans',sans-serif;font-size:31.16px;line-height:31.16px;color:#404040;font-weight:normal;white-space:nowrap;left:-568.5px;width:1200px;text-align:center;">98</div>
<div style="position:absolute;top:899.01px;font-family:'Liberation Sans',sans-serif;font-size:31.16px;line-height:31.16px;color:#404040;font-weight:normal;white-space:nowrap;left:-568.5px;width:1200px;text-align:center;">99</div>
<div style="position:absolute;top:944.97px;font-family:'Liberation Sans',sans-serif;font-size:31.16px;line-height:31.16px;color:#404040;font-weight:normal;white-space:nowrap;left:-568.5px;width:1200px;text-align:center;">100</div>
<div style="position:absolute;top:990.93px;font-family:'Liberation Sans',sans-serif;font-size:31.16px;line-height:31.16px;color:#404040;font-weight:normal;white-space:nowrap;left:-568.5px;width:1200px;text-align:center;">101</div>
<div style="position:absolute;top:1036.88px;font-family:'Liberation Sans',sans-serif;font-size:31.16px;line-height:31.16px;color:#404040;font-weight:normal;white-space:nowrap;left:-568.5px;width:1200px;text-align:center;">102</div>
<div style="position:absolute;top:1082.84px;font-family:'Liberation Sans',sans-serif;font-size:31.16px;line-height:31.16px;color:#404040;font-weight:normal;white-space:nowrap;left:-568.5px;width:1200px;text-align:center;">103</div>
<div style="position:absolute;top:1128.80px;font-family:'Liberation Sans',sans-serif;font-size:31.16px;line-height:31.16px;color:#404040;font-weight:normal;white-space:nowrap;left:-568.5px;width:1200px;text-align:center;">104</div>
<div style="position:absolute;top:1174.75px;font-family:'Liberation Sans',sans-serif;font-size:31.16px;line-height:31.16px;color:#404040;font-weight:normal;white-space:nowrap;left:-568.5px;width:1200px;text-align:center;">105</div>
<div style="position:absolute;top:1220.71px;font-family:'Liberation Sans',sans-serif;font-size:31.16px;line-height:31.16px;color:#404040;font-weight:normal;white-space:nowrap;left:-568.5px;width:1200px;text-align:center;">106</div>
<div style="position:absolute;top:1266.67px;font-family:'Liberation Sans',sans-serif;font-size:31.16px;line-height:31.16px;color:#404040;font-weight:normal;white-space:nowrap;left:-568.5px;width:1200px;text-align:center;">107</div>
<div style="position:absolute;top:170.30px;font-family:'Liberation Sans',sans-serif;font-size:23.77px;line-height:23.77px;color:#000;font-weight:bold;white-space:nowrap;letter-spacing:-0.361px;left:67.50px;">Preview</div>
<div style="position:absolute;top:209.76px;font-family:'Liberation Sans',sans-serif;font-size:31.3px;line-height:31.3px;color:#000;font-weight:normal;white-space:nowrap;letter-spacing:1.296px;left:69.32px;">origin</div>
<div style="position:absolute;top:209.76px;font-family:'Liberation Sans',sans-serif;font-size:31.3px;line-height:31.3px;color:#000;font-weight:normal;white-space:nowrap;letter-spacing:2.163px;left:226.54px;">mpg</div>
<div style="position:absolute;top:255.71px;font-family:'Liberation Sans',sans-serif;font-size:31.3px;line-height:31.3px;color:#000;font-weight:normal;white-space:nowrap;letter-spacing:1.197px;left:69.72px;">europe</div>
<div style="position:absolute;top:255.71px;font-family:'Liberation Sans',sans-serif;font-size:31.3px;line-height:31.3px;color:#000;font-weight:normal;white-space:nowrap;letter-spacing:0.627px;left:238.33px;">27.89143</div>
<div style="position:absolute;top:301.67px;font-family:'Liberation Sans',sans-serif;font-size:31.3px;line-height:31.3px;color:#000;font-weight:normal;white-space:nowrap;letter-spacing:0.774px;left:70.38px;">japan</div>
<div style="position:absolute;top:301.67px;font-family:'Liberation Sans',sans-serif;font-size:31.3px;line-height:31.3px;color:#000;font-weight:normal;white-space:nowrap;letter-spacing:0.557px;left:238.82px;">30.45063</div>
<div style="position:absolute;top:347.63px;font-family:'Liberation Sans',sans-serif;font-size:31.3px;line-height:31.3px;color:#000;font-weight:normal;white-space:nowrap;letter-spacing:-1.154px;left:69.34px;">usa</div>
<div style="position:absolute;top:347.63px;font-family:'Liberation Sans',sans-serif;font-size:31.3px;line-height:31.3px;color:#000;font-weight:normal;white-space:nowrap;letter-spacing:0.627px;left:238.33px;">20.08353</div>
<div style="position:absolute;top:490.25px;font-family:'Liberation Sans',sans-serif;font-size:25.36px;line-height:25.36px;color:#1c6a8c;font-weight:bold;white-space:nowrap;letter-spacing:0.330px;left:68.40px;">Basic statistics for mpg, cylinders, and horsepower</div>
<svg style="position:absolute;left:69px;top:529px" width="40" height="36" viewBox="0 0 40 36"><path d="M9.6 3.1 H2.5 V33.2 H9.6" fill="none" stroke="#000" stroke-width="2.5"/><path d="M29.6 3.1 H36.6 V33.2 H29.6" fill="none" stroke="#000" stroke-width="2.5"/></svg>
<div style="position:absolute;top:537.90px;font-family:'Liberation Sans',sans-serif;font-size:18.12px;line-height:18.12px;color:#000;font-weight:bold;white-space:nowrap;left:77.07px;transform:scaleX(0.7767);transform-origin:0 0;">P</div>
<div style="position:absolute;top:537.90px;font-family:'Liberation Sans',sans-serif;font-size:18.12px;line-height:18.12px;color:#000;font-weight:bold;white-space:nowrap;left:89.64px;transform:scaleX(0.8609);transform-origin:0 0;">Y</div>
<div style="position:absolute;top:531.46px;font-family:'Liberation Sans',sans-serif;font-size:31.3px;line-height:31.3px;color:#000;font-weight:normal;white-space:nowrap;letter-spacing:0.308px;left:110.85px;">DataFrame</div>
<div style="position:absolute;top:629.57px;font-family:'Liberation Sans',sans-serif;font-size:23.77px;line-height:23.77px;color:#000;font-weight:bold;white-space:nowrap;letter-spacing:-0.261px;left:66.90px;">Preview</div>
<div style="position:absolute;top:669.33px;font-family:'Liberation Sans',sans-serif;font-size:31.3px;line-height:31.3px;color:#000;font-weight:normal;white-space:nowrap;letter-spacing:1.888px;left:226.79px;">mpg</div>
<div style="position:absolute;top:669.33px;font-family:'Liberation Sans',sans-serif;font-size:31.3px;line-height:31.3px;color:#000;font-weight:normal;white-space:nowrap;letter-spacing:0.494px;left:384.72px;">cylinders</div>
<div style="position:absolute;top:669.33px;font-family:'Liberation Sans',sans-serif;font-size:31.3px;line-height:31.3px;color:#000;font-weight:normal;white-space:nowrap;letter-spacing:1.207px;left:541.04px;">horsepower</div>
<div style="position:absolute;top:715.28px;font-family:'Liberation Sans',sans-serif;font-size:31.3px;line-height:31.3px;color:#000;font-weight:normal;white-space:nowrap;letter-spacing:0.906px;left:69.74px;">mean</div>
<div style="position:absolute;top:715.28px;font-family:'Liberation Sans',sans-serif;font-size:31.3px;line-height:31.3px;color:#000;font-weight:normal;white-space:nowrap;letter-spacing:0.598px;left:239.03px;">23.51457</div>
<div style="position:absolute;top:715.28px;font-family:'Liberation Sans',sans-serif;font-size:31.3px;line-height:31.3px;color:#000;font-weight:normal;white-space:nowrap;letter-spacing:0.644px;left:395.52px;">5.454774</div>
<div style="position:absolute;top:715.28px;font-family:'Liberation Sans',sans-serif;font-size:31.3px;line-height:31.3px;color:#000;font-weight:normal;white-space:nowrap;letter-spacing:0.641px;left:553.24px;">104.4694</div>
<div style="position:absolute;top:761.24px;font-family:'Liberation Sans',sans-serif;font-size:31.3px;line-height:31.3px;color:#000;font-weight:normal;white-space:nowrap;letter-spacing:0.991px;left:69.74px;">median</div>
<div style="position:absolute;top:761.24px;font-family:'Liberation Sans',sans-serif;font-size:31.3px;line-height:31.3px;color:#000;font-weight:normal;white-space:nowrap;letter-spacing:0.721px;left:338.23px;">23</div>
<div style="position:absolute;top:761.24px;font-family:'Liberation Sans',sans-serif;font-size:31.3px;line-height:31.3px;color:#000;font-weight:normal;white-space:nowrap;right:1517.42px;">4</div>
<div style="position:absolute;top:761.24px;font-family:'Liberation Sans',sans-serif;font-size:31.3px;line-height:31.3px;color:#000;font-weight:normal;white-space:nowrap;letter-spacing:0.939px;left:625.03px;">93.5</div>
<div style="position:absolute;top:807.20px;font-family:'Liberation Sans',sans-serif;font-size:31.3px;line-height:31.3px;color:#000;font-weight:normal;white-space:nowrap;letter-spacing:1.843px;left:68.84px;">mode</div>
<div style="position:absolute;top:807.20px;font-family:'Liberation Sans',sans-serif;font-size:31.3px;line-height:31.3px;color:#000;font-weight:normal;white-space:nowrap;letter-spacing:2.610px;left:336.44px;">13</div>
<div style="position:absolute;top:807.20px;font-family:'Liberation Sans',sans-serif;font-size:31.3px;line-height:31.3px;color:#000;font-weight:normal;white-space:nowrap;right:1517.42px;">4</div>
<div style="position:absolute;top:807.20px;font-family:'Liberation Sans',sans-serif;font-size:31.3px;line-height:31.3px;color:#000;font-weight:normal;white-space:nowrap;letter-spacing:0.906px;left:634.24px;">150</div>
<div style="position:absolute;top:853.15px;font-family:'Liberation Sans',sans-serif;font-size:31.3px;line-height:31.3px;color:#000;font-weight:normal;white-space:nowrap;letter-spacing:0.693px;left:68.84px;">range</div>
<div style="position:absolute;top:853.15px;font-family:'Liberation Sans',sans-serif;font-size:31.3px;line-height:31.3px;color:#000;font-weight:normal;white-space:nowrap;letter-spacing:0.809px;left:310.52px;">37.6</div>
<div style="position:absolute;top:853.15px;font-family:'Liberation Sans',sans-serif;font-size:31.3px;line-height:31.3px;color:#000;font-weight:normal;white-space:nowrap;right:1516.93px;">5</div>
<div style="position:absolute;top:853.15px;font-family:'Liberation Sans',sans-serif;font-size:31.3px;line-height:31.3px;color:#000;font-weight:normal;white-space:nowrap;letter-spacing:0.906px;left:634.24px;">184</div>
<div style="position:absolute;left:64.9px;top:1270.5px;width:80.5px;height:45px;background:#fff;border-radius:0 14px 0 0;box-shadow:1px -1px 3px rgba(0,0,0,0.28)"></div>
<div style="position:absolute;left:62px;top:1303px;width:3px;height:8px;background:#f0f0f0"></div>
<div style="position:absolute;top:1276.60px;font-family:'Liberation Sans',sans-serif;font-size:28.7px;line-height:28.7px;color:#17683a;font-weight:bold;white-space:nowrap;font-style:italic;left:71.50px;transform:scaleX(0.9477);transform-origin:0 0;">T</div>
<div style="position:absolute;top:1276.60px;font-family:'Liberation Sans',sans-serif;font-size:28.7px;line-height:28.7px;color:#17683a;font-weight:bold;white-space:nowrap;font-style:italic;left:122.00px;transform:scaleX(0.7739);transform-origin:0 0;">s</div>
<svg style="position:absolute;left:80px;top:1276px" width="46" height="28" viewBox="80 1276 46 28"><ellipse cx="94.6" cy="1293.3" rx="7.7" ry="7.3" fill="#22a565"/><path d="M97.8 1286 H103.4 L100.6 1300.6 H95.2 Z" fill="#22a565"/><path d="M93.6 1289.6 V1297 M89.9 1293.3 H97.3" stroke="#fff" stroke-width="2.1"/><ellipse cx="115.3" cy="1293.3" rx="6.6" ry="7.3" fill="#17683a"/><path d="M107.2 1280 H111.6 L108.3 1300.6 H104.2 Z" fill="#17683a"/><path d="M111.3 1290.8 L116.1 1295.8 M116.1 1290.8 L111.3 1295.8" stroke="#fff" stroke-width="1.8"/></svg>
<div style="position:absolute;left:981.5px;top:115px;width:28px;height:1195px;background:#f6f6f6;border-radius:14px"></div>
<svg style="position:absolute;left:986px;top:121px" width="20" height="16"><path d="M10 2.5 L17 13 H3 Z" fill="#707070" stroke="#707070" stroke-width="2" stroke-linejoin="round"/></svg>
<svg style="position:absolute;left:986px;top:1290px" width="20" height="16"><path d="M10 13.5 L17 3 H3 Z" fill="#707070" stroke="#707070" stroke-width="2" stroke-linejoin="round"/></svg>
<div style="position:absolute;left:988.5px;top:1018.5px;width:13.5px;height:255px;background:#707070;border-radius:7px"></div>
<div style="position:absolute;left:1010.9px;top:117px;width:1.1px;height:1244px;background:#d4d4d4"></div>
<div style="position:absolute;left:0px;top:1310px;width:1011px;height:52px;background:#f0f0f0"></div>
<div style="position:absolute;left:0px;top:1362px;width:2048px;height:3px;background:#fbfbfb"></div>
<svg style="position:absolute;left:30px;top:1325px" width="18" height="22"><path d="M13 2.5 L5 10 L13 17.5" fill="none" stroke="#8f8f8f" stroke-width="1.5"/></svg>
<svg style="position:absolute;left:84px;top:1325px" width="18" height="22"><path d="M5 2.5 L13 10 L5 17.5" fill="none" stroke="#8f8f8f" stroke-width="1.5"/></svg>
<div style="position:absolute;top:1325.50px;font-family:'Liberation Sans',sans-serif;font-size:24px;line-height:24px;color:#262626;font-weight:normal;white-space:nowrap;letter-spacing:0.330px;left:190.90px;">mpg</div>
<div style="position:absolute;left:258.5px;top:1322px;width:2px;height:28.5px;background:#d0d0d0"></div>
<div style="position:absolute;left:393.5px;top:1322px;width:2px;height:28.5px;background:#d0d0d0"></div>
<div style="position:absolute;left:266px;top:1304px;width:121px;height:52px;background:#fff;border-radius:0 0 7px 7px;box-shadow:0 1px 2px rgba(0,0,0,0.12)"></div>
<div style="position:absolute;top:1320.40px;font-family:'Liberation Sans',sans-serif;font-size:24.2px;line-height:24.2px;color:#1a1a1a;font-weight:normal;white-space:nowrap;letter-spacing:-1.301px;-webkit-text-stroke:0.4px #1a1a1a;left:280.00px;">Analysis1</div>
<div style="position:absolute;left:280px;top:1347.5px;width:93px;height:4px;background:#107c41;border-radius:1px"></div>
<svg style="position:absolute;left:462px;top:1325px" width="22" height="22"><path d="M11 1.5 V20.5 M1.5 11 H20.5" stroke="#333" stroke-width="2"/></svg>
<div style="position:absolute;left:611.5px;top:1328.8px;width:3.6px;height:3.4px;background:#333;border-radius:1px"></div>
<div style="position:absolute;left:611.5px;top:1334.8px;width:3.6px;height:3.4px;background:#333;border-radius:1px"></div>
<div style="position:absolute;left:611.5px;top:1340.8px;width:3.6px;height:3.4px;background:#333;border-radius:1px"></div>
<div style="position:absolute;left:641px;top:1322.5px;width:340px;height:25.5px;background:#f6f6f6;border-radius:13px"></div>
<svg style="position:absolute;left:646px;top:1327px" width="16" height="16"><path d="M3 8 L12.5 2.5 V13.5 Z" fill="#707070" stroke="#707070" stroke-width="2" stroke-linejoin="round"/></svg>
<svg style="position:absolute;left:959px;top:1327px" width="16" height="16"><path d="M13 8 L3.5 2.5 V13.5 Z" fill="#707070" stroke="#707070" stroke-width="2" stroke-linejoin="round"/></svg>
<div style="position:absolute;left:668px;top:1329px;width:137px;height:13.5px;background:#707070;border-radius:7px"></div>
<div style="position:absolute;left:1028px;top:134px;width:1003px;height:1209px;background:#edebe9"></div>
<div style="position:absolute;left:2013px;top:200px;width:18px;height:1015px;background:#f2f1f0;border-radius:9px"></div>
<div style="position:absolute;left:2016.3px;top:1149.5px;width:10.7px;height:59.3px;background:#6b6b6b;border-radius:5.5px"></div>
<div style="position:absolute;left:1028px;top:199px;width:985px;height:1144px;overflow:hidden">
<svg style="position:absolute;left:48px;top:-9px" width="32" height="26"><path d="M5 2 H2 V24 H5 M27 2 H30 V24 H27" fill="none" stroke="#333" stroke-width="1.8"/><text x="6.8" y="17.4" font-family="Liberation Sans" font-weight="bold" font-size="17" fill="#333">P</text><text x="16.8" y="17.4" font-family="Liberation Sans" font-weight="bold" font-size="17" fill="#333">Y</text></svg>
<div style="position:absolute;top:-5.30px;font-family:'Liberation Sans',sans-serif;font-size:19.5px;line-height:19.5px;color:#6b6b6b;font-weight:normal;white-space:nowrap;letter-spacing:-0.350px;left:97.20px;">Show analysis</div>
<svg style="position:absolute;left:237px;top:-2px" width="16" height="11"><path d="M2 2 L8 8 L14 2" fill="none" stroke="#555" stroke-width="1.5"/></svg>
<div style="position:absolute;top:44.00px;font-family:'Liberation Sans',sans-serif;font-size:19.57px;line-height:19.57px;color:#333;font-weight:normal;white-space:nowrap;letter-spacing:0.115px;left:49.60px;">4 rows × 3 columns</div>
<div style="position:absolute;left:50.5px;top:69.5px;width:741.5px;height:40.5px;background:#f6f6f6"></div>
<div style="position:absolute;left:49.5px;top:68.5px;width:743.5px;height:2px;background:#8e8e8e"></div>
<div style="position:absolute;left:49.5px;top:109px;width:743.5px;height:2px;background:#8e8e8e"></div>
<div style="position:absolute;left:49.5px;top:150px;width:743.5px;height:2px;background:#8e8e8e"></div>
<div style="position:absolute;left:49.5px;top:191px;width:743.5px;height:2px;background:#8e8e8e"></div>
<div style="position:absolute;left:49.5px;top:232px;width:743.5px;height:2px;background:#8e8e8e"></div>
<div style="position:absolute;left:49.5px;top:273px;width:743.5px;height:2px;background:#8e8e8e"></div>
<div style="position:absolute;left:49.5px;top:68.5px;width:2px;height:206.5px;background:#8e8e8e"></div>
<div style="position:absolute;left:140px;top:68.5px;width:2px;height:206.5px;background:#8e8e8e"></div>
<div style="position:absolute;left:358px;top:68.5px;width:2px;height:206.5px;background:#8e8e8e"></div>
<div style="position:absolute;left:574px;top:68.5px;width:2px;height:206.5px;background:#8e8e8e"></div>
<div style="position:absolute;left:791px;top:68.5px;width:2px;height:206.5px;background:#8e8e8e"></div>
<div style="position:absolute;top:80.00px;font-family:'Liberation Mono',monospace;font-size:23px;line-height:23px;color:#333;font-weight:bold;white-space:nowrap;letter-spacing:-1.162px;left:148.30px;">mpg</div>
<div style="position:absolute;top:80.00px;font-family:'Liberation Mono',monospace;font-size:23px;line-height:23px;color:#333;font-weight:bold;white-space:nowrap;letter-spacing:-1.162px;left:365.80px;">cylinders</div>
<div style="position:absolute;top:80.00px;font-family:'Liberation Mono',monospace;font-size:23px;line-height:23px;color:#333;font-weight:bold;white-space:nowrap;letter-spacing:-1.162px;left:581.40px;">horsepower</div>
<div style="position:absolute;top:121.60px;font-family:'Liberation Mono',monospace;font-size:23px;line-height:23px;color:#333;font-weight:normal;white-space:nowrap;letter-spacing:-1.162px;left:57.90px;">mean</div>
<div style="position:absolute;top:121.60px;font-family:'Liberation Mono',monospace;font-size:23px;line-height:23px;color:#138a5a;font-weight:normal;white-space:nowrap;letter-spacing:-1.162px;left:148.40px;">23.5145728643216</div>
<div style="position:absolute;top:121.60px;font-family:'Liberation Mono',monospace;font-size:23px;line-height:23px;color:#138a5a;font-weight:normal;white-space:nowrap;letter-spacing:-1.162px;left:366.60px;">5.45477386934673</div>
<div style="position:absolute;top:121.60px;font-family:'Liberation Mono',monospace;font-size:23px;line-height:23px;color:#138a5a;font-weight:normal;white-space:nowrap;letter-spacing:-1.162px;left:582.40px;">104.469387755102</div>
<div style="position:absolute;top:162.60px;font-family:'Liberation Mono',monospace;font-size:23px;line-height:23px;color:#333;font-weight:normal;white-space:nowrap;letter-spacing:-1.162px;left:57.90px;">median</div>
<div style="position:absolute;top:162.60px;font-family:'Liberation Mono',monospace;font-size:23px;line-height:23px;color:#138a5a;font-weight:normal;white-space:nowrap;letter-spacing:-1.162px;left:148.40px;">23</div>
<div style="position:absolute;top:162.60px;font-family:'Liberation Mono',monospace;font-size:23px;line-height:23px;color:#138a5a;font-weight:normal;white-space:nowrap;letter-spacing:-1.162px;left:366.90px;">4</div>
<div style="position:absolute;top:162.60px;font-family:'Liberation Mono',monospace;font-size:23px;line-height:23px;color:#138a5a;font-weight:normal;white-space:nowrap;letter-spacing:-1.162px;left:582.50px;">93.5</div>
<div style="position:absolute;top:203.60px;font-family:'Liberation Mono',monospace;font-size:23px;line-height:23px;color:#333;font-weight:normal;white-space:nowrap;letter-spacing:-1.162px;left:57.90px;">mode</div>
<div style="position:absolute;top:203.60px;font-family:'Liberation Mono',monospace;font-size:23px;line-height:23px;color:#138a5a;font-weight:normal;white-space:nowrap;letter-spacing:-1.162px;left:148.40px;">13</div>
<div style="position:absolute;top:203.60px;font-family:'Liberation Mono',monospace;font-size:23px;line-height:23px;color:#138a5a;font-weight:normal;white-space:nowrap;letter-spacing:-1.162px;left:366.90px;">4</div>
<div style="position:absolute;top:203.60px;font-family:'Liberation Mono',monospace;font-size:23px;line-height:23px;color:#138a5a;font-weight:normal;white-space:nowrap;letter-spacing:-1.162px;left:582.40px;">150</div>
<div style="position:absolute;top:244.60px;font-family:'Liberation Mono',monospace;font-size:23px;line-height:23px;color:#333;font-weight:normal;white-space:nowrap;letter-spacing:-1.162px;left:56.30px;">range</div>
<div style="position:absolute;top:244.60px;font-family:'Liberation Mono',monospace;font-size:23px;line-height:23px;color:#138a5a;font-weight:normal;white-space:nowrap;letter-spacing:-1.162px;left:148.60px;">37.6</div>
<div style="position:absolute;top:244.60px;font-family:'Liberation Mono',monospace;font-size:23px;line-height:23px;color:#138a5a;font-weight:normal;white-space:nowrap;letter-spacing:-1.162px;left:366.60px;">5</div>
<div style="position:absolute;top:244.60px;font-family:'Liberation Mono',monospace;font-size:23px;line-height:23px;color:#138a5a;font-weight:normal;white-space:nowrap;letter-spacing:-1.162px;left:582.40px;">184</div>
<div style="position:absolute;left:50.299999999999955px;top:295.3px;width:286.5px;height:38px;border:1.5px solid #d4d4d4;border-radius:6px;box-sizing:border-box"></div>
<svg style="position:absolute;left:70.20000000000005px;top:303.3px" width="22" height="22"><path d="M11 1.3 V20.7 M1.3 11 H20.7" stroke="#262626" stroke-width="1.7" stroke-linecap="round"/></svg>
<div style="position:absolute;top:306.00px;font-family:'Liberation Sans',sans-serif;font-size:20.29px;line-height:20.29px;color:#262626;font-weight:normal;white-space:nowrap;letter-spacing:-0.424px;left:108.70px;">Add results to new sheet</div>
<svg style="position:absolute;left:59.5px;top:355px" width="21" height="24"><path d="M12 0.9 C13.6 0.9 14 2.5 13.9 4.5 L13.6 8.8 L17.3 9.6 C18.8 10 19.3 11.2 19 12.8 L17.4 20.6 C17.1 22.3 15.6 23.2 13.8 22.9 L3.6 19.4 C1.7 18.6 0.9 17.3 1 15.5 C1.1 13.7 2.2 12.6 4.4 11.5 C7.2 10 8.9 7.2 10.2 2.8 C10.6 1.6 11.2 0.9 12 0.9 Z" fill="none" stroke="#3b3b3b" stroke-width="1.7" stroke-linejoin="round"/></svg>
<svg style="position:absolute;left:98.5px;top:355.79999999999995px" width="21" height="24"><g transform="translate(0,24) scale(1,-1)"><path d="M12 0.9 C13.6 0.9 14 2.5 13.9 4.5 L13.6 8.8 L17.3 9.6 C18.8 10 19.3 11.2 19 12.8 L17.4 20.6 C17.1 22.3 15.6 23.2 13.8 22.9 L3.6 19.4 C1.7 18.6 0.9 17.3 1 15.5 C1.1 13.7 2.2 12.6 4.4 11.5 C7.2 10 8.9 7.2 10.2 2.8 C10.6 1.6 11.2 0.9 12 0.9 Z" fill="none" stroke="#3b3b3b" stroke-width="1.7" stroke-linejoin="round"/></g></svg>
<svg style="position:absolute;left:50px;top:404px" width="34" height="31"><defs>
<linearGradient id="gl" x1="0" y1="0" x2="0" y2="1"><stop offset="0" stop-color="#2ba0dc"/><stop offset="0.38" stop-color="#2a9dd0"/><stop offset="0.55" stop-color="#3c9a80"/><stop offset="0.72" stop-color="#8fb050"/><stop offset="1" stop-color="#d3c332"/></linearGradient>
<linearGradient id="gr" x1="0" y1="0" x2="0" y2="1"><stop offset="0" stop-color="#b259d4"/><stop offset="0.3" stop-color="#d95aa8"/><stop offset="0.5" stop-color="#e65a8c"/><stop offset="0.72" stop-color="#f0654f"/><stop offset="1" stop-color="#e8a464"/></linearGradient>
</defs>
<g transform="translate(-1078,-603)">
<path d="M1085.5 605 H1100 C1102 605 1103 606.3 1102.2 608 L1094 622.3 C1093.3 623.4 1092.6 624 1091 624 H1082.2 C1080.6 624 1079.8 623 1080.2 621.5 L1083.2 607 C1083.6 605.7 1084.3 605 1085.5 605 Z" fill="url(#gl)"/>
<path d="M1095.2 605 H1100 C1102 605 1103 606.3 1102.2 608 L1099.8 612.3 H1093.6 Z" fill="#1f58d3"/>
<path d="M1100.8 613 H1107.4 C1109 613 1109.9 614.2 1109.4 615.8 L1105.5 629.8 C1105.1 631 1104.3 631.7 1103 631.7 H1090.4 C1088.8 631.7 1088.1 630.7 1088.6 629.4 L1098 614.6 C1098.8 613.5 1099.6 613 1100.8 613 Z" fill="url(#gr)"/>
</g></svg>
<div style="position:absolute;top:409.20px;font-family:'Liberation Sans',sans-serif;font-size:24.2px;line-height:24.2px;color:#242424;font-weight:normal;white-space:nowrap;letter-spacing:0.116px;-webkit-text-stroke:0.65px #242424;left:95.80px;">Copilot</div>
<div style="position:absolute;top:414.20px;font-family:'Liberation Sans',sans-serif;font-size:18.26px;line-height:18.26px;color:#616161;font-weight:normal;white-space:nowrap;letter-spacing:-0.831px;left:192.00px;">AI-generated content may be incorrect</div>
<div style="position:absolute;top:463.50px;font-family:'Liberation Sans',sans-serif;font-size:23.62px;line-height:23.62px;color:#2b2b2b;font-weight:normal;white-space:nowrap;letter-spacing:-0.375px;left:49.60px;">Here are the basic statistics for the mpg dataset: the average mpg is about 23.5, the</div>
<div style="position:absolute;top:496.35px;font-family:'Liberation Sans',sans-serif;font-size:23.62px;line-height:23.62px;color:#2b2b2b;font-weight:normal;white-space:nowrap;letter-spacing:-0.460px;left:50.00px;">median is 23, the most common value is 13, and the range is 37.6. For cylinders, the</div>
<div style="position:absolute;top:529.20px;font-family:'Liberation Sans',sans-serif;font-size:23.62px;line-height:23.62px;color:#2b2b2b;font-weight:normal;white-space:nowrap;letter-spacing:-0.438px;left:50.50px;">average is about 5.45, the median is 4, the most common value is 4, and the range is</div>
<div style="position:absolute;top:562.05px;font-family:'Liberation Sans',sans-serif;font-size:23.62px;line-height:23.62px;color:#2b2b2b;font-weight:normal;white-space:nowrap;letter-spacing:-0.442px;left:50.60px;">5. For horsepower, the average is about 104.5, the median is 93.5, the most common</div>
<div style="position:absolute;top:594.90px;font-family:'Liberation Sans',sans-serif;font-size:23.62px;line-height:23.62px;color:#2b2b2b;font-weight:normal;white-space:nowrap;letter-spacing:-0.483px;left:51.50px;">value is 150, and the range is 184. These numbers give a quick overview of the central</div>
<div style="position:absolute;top:627.75px;font-family:'Liberation Sans',sans-serif;font-size:23.62px;line-height:23.62px;color:#2b2b2b;font-weight:normal;white-space:nowrap;letter-spacing:-0.433px;left:51.20px;">tendency and spread for these key features.</div>
<svg style="position:absolute;left:59.5px;top:682px" width="21" height="24"><path d="M12 0.9 C13.6 0.9 14 2.5 13.9 4.5 L13.6 8.8 L17.3 9.6 C18.8 10 19.3 11.2 19 12.8 L17.4 20.6 C17.1 22.3 15.6 23.2 13.8 22.9 L3.6 19.4 C1.7 18.6 0.9 17.3 1 15.5 C1.1 13.7 2.2 12.6 4.4 11.5 C7.2 10 8.9 7.2 10.2 2.8 C10.6 1.6 11.2 0.9 12 0.9 Z" fill="none" stroke="#3b3b3b" stroke-width="1.7" stroke-linejoin="round"/></svg>
<svg style="position:absolute;left:98.5px;top:682.8px" width="21" height="24"><g transform="translate(0,24) scale(1,-1)"><path d="M12 0.9 C13.6 0.9 14 2.5 13.9 4.5 L13.6 8.8 L17.3 9.6 C18.8 10 19.3 11.2 19 12.8 L17.4 20.6 C17.1 22.3 15.6 23.2 13.8 22.9 L3.6 19.4 C1.7 18.6 0.9 17.3 1 15.5 C1.1 13.7 2.2 12.6 4.4 11.5 C7.2 10 8.9 7.2 10.2 2.8 C10.6 1.6 11.2 0.9 12 0.9 Z" fill="none" stroke="#3b3b3b" stroke-width="1.7" stroke-linejoin="round"/></g></svg>
<svg style="position:absolute;left:382px;top:770px" width="30" height="27"><path d="M15.5 3 H7 C4.5 3 3 4.5 3 7 V20 C3 22.5 4.5 24 7 24 H15.5" fill="none" stroke="#4a4a4a" stroke-width="1.7"/><path d="M9 13.6 H26 M21 8 L26.5 13.6 L21 19.2" fill="none" stroke="#4a4a4a" stroke-width="1.7" stroke-linejoin="round"/></svg>
<div style="position:absolute;top:775.80px;font-family:'Liberation Sans',sans-serif;font-size:19.86px;line-height:19.86px;color:#4a4a4a;font-weight:normal;white-space:nowrap;letter-spacing:-0.425px;left:418.10px;">Stop advanced analysis</div>
<div style="position:absolute;left:50px;top:878.8px;width:795px;height:42px;border:1.8px solid #62b985;border-radius:12px;box-sizing:border-box"></div>
<div style="position:absolute;top:891.50px;font-family:'Liberation Sans',sans-serif;font-size:20.29px;line-height:20.29px;color:#474747;font-weight:normal;white-space:nowrap;letter-spacing:-0.282px;left:64.60px;">Show a boxplot for mpg, cylinders, and horsepower to visualize their spread and outliers</div>
<div style="position:absolute;left:50px;top:934.8px;width:520px;height:42px;border:1.8px solid #62b985;border-radius:12px;box-sizing:border-box"></div>
<div style="position:absolute;top:947.30px;font-family:'Liberation Sans',sans-serif;font-size:20.29px;line-height:20.29px;color:#474747;font-weight:normal;white-space:nowrap;letter-spacing:-0.126px;left:64.50px;">Compare the distribution of mpg across different origins</div>
<div style="position:absolute;left:50px;top:1014.5px;width:902px;height:87.5px;background:#fff;border:1.3px solid #d6d6d6;border-radius:26px;box-sizing:border-box;box-shadow:0 1.5px 2px rgba(0,0,0,0.12)"></div>
<div style="position:absolute;top:1047.60px;font-family:'Liberation Sans',sans-serif;font-size:23.19px;line-height:23.19px;color:#6e6e6e;font-weight:normal;white-space:nowrap;letter-spacing:-0.227px;left:77.80px;">Message Copilot</div>
<svg style="position:absolute;left:834px;top:1042.5px" width="30" height="30" viewBox="0 0 26.4 28"><g fill="none" stroke="#424242" stroke-width="1.5"><path d="M13.2 3.5 C11.5 1.5 8.5 2.2 7.8 5 C5 5.3 3.8 8 5.2 10.5 C2.5 11.5 2 14.8 3.8 16.8 C2.5 19.5 4.5 22.5 7.5 22.3 C8 25 10.5 26.5 13.2 25.3 Z"/><path d="M13.2 3.5 C14.9 1.5 17.9 2.2 18.6 5 C21.4 5.3 22.6 8 21.2 10.5 C23.9 11.5 24.4 14.8 22.6 16.8 C23.9 19.5 21.9 22.5 18.9 22.3 C18.4 25 15.9 26.5 13.2 25.3"/><circle cx="8.9" cy="8.8" r="1.7"/><path d="M10.6 8.8 H13.2"/><circle cx="8.9" cy="17.5" r="1.7"/><path d="M4.5 13.3 H7.5 C8.5 13.3 8.9 14 8.9 15 V15.8"/><circle cx="18.8" cy="12.8" r="1.7"/><path d="M18.8 14.5 V16.5 C18.8 17.3 18.3 17.8 17.5 17.8 H13.2 M20.5 12.8 H22"/></g></svg>
<svg style="position:absolute;left:890px;top:1042px" width="24" height="32"><g fill="none" stroke="#424242" stroke-width="1.7"><rect x="7.2" y="2.3" width="9.6" height="17.8" rx="4.8"/><path d="M3 12.6 C3 18.6 7 22.8 12 22.8 C17 22.8 21 18.6 21 12.6 M12 22.8 V28.5" stroke-linecap="round"/></g></svg>
</div>
<div style="position:absolute;left:1041px;top:159px;width:26.5px;height:1.7px;background:#424242"></div>
<div style="position:absolute;left:1041px;top:167.3px;width:26.5px;height:1.7px;background:#424242"></div>
<div style="position:absolute;left:1041px;top:175.6px;width:26.5px;height:1.7px;background:#424242"></div>
<div style="position:absolute;top:158.30px;font-family:'Liberation Sans',sans-serif;font-size:25.51px;line-height:25.51px;color:#242424;font-weight:normal;white-space:nowrap;letter-spacing:1.280px;-webkit-text-stroke:0.7px #242424;left:1086.80px;">Copilot</div>
<div style="position:absolute;left:1874px;top:143px;width:51.5px;height:52px;background:#f5f5f5;border-radius:7px"></div>
<svg style="position:absolute;left:1884px;top:153px" width="32" height="32"><g fill="none" stroke="#424242" stroke-width="1.7"><path d="M9.5 26.7 C11.3 27.6 13.3 28.1 15.5 28.1 C22.4 28.1 28 22.5 28 15.6 C28 8.7 22.4 3.1 15.5 3.1 C8.6 3.1 3 8.7 3 15.6 C3 17.8 3.5 19.8 4.4 21.6 L3.2 27.6 Z" stroke-linejoin="round"/><path d="M15.5 9.5 V21.5 M9.5 15.5 H21.5"/></g></svg>
<svg style="position:absolute;left:1946px;top:156px" width="25" height="15"><path d="M2.5 2.5 L12.4 12.4 L22.3 2.5" fill="none" stroke="#424242" stroke-width="1.8"/></svg>
<svg style="position:absolute;left:1999px;top:150.5px" width="24" height="24"><path d="M2.5 2.5 L21.5 21.5 M21.5 2.5 L2.5 21.5" stroke="#424242" stroke-width="1.8"/></svg>
</body></html>
